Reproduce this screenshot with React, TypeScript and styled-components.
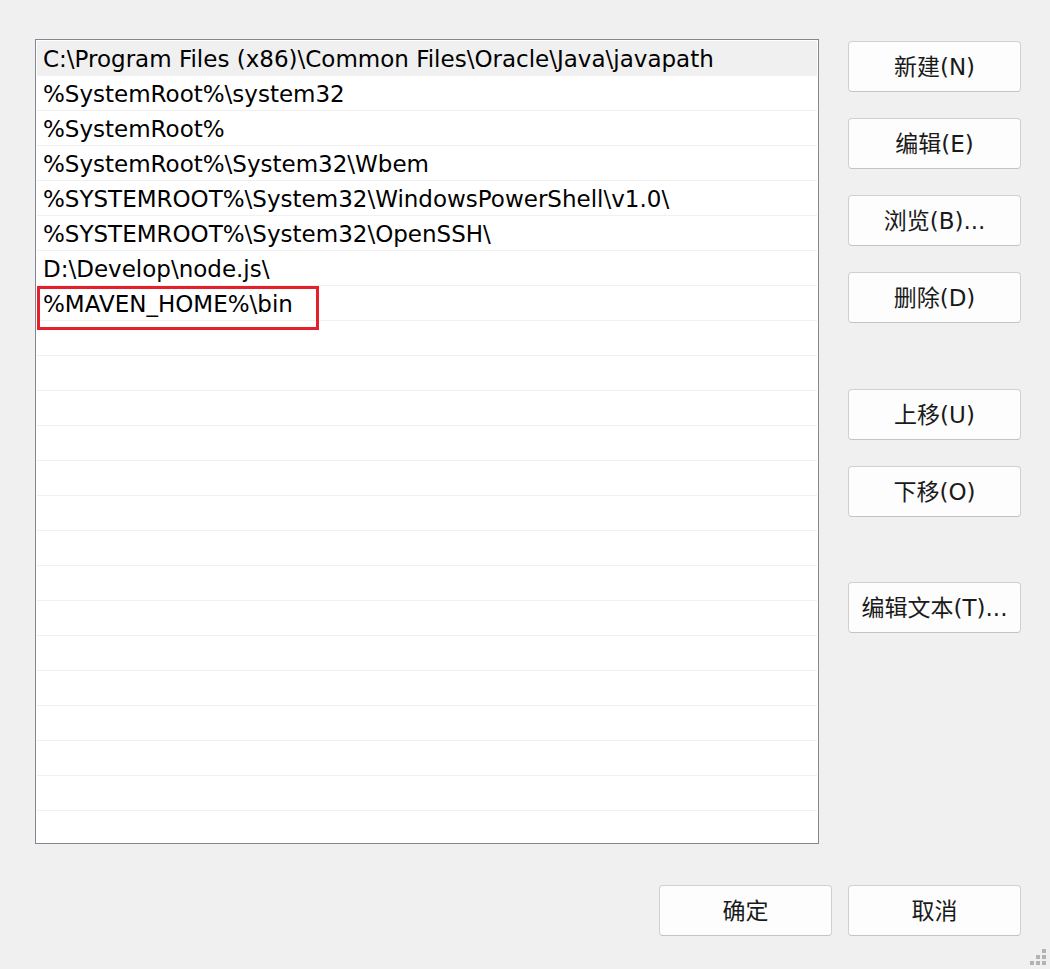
import React from "react";
import styled, { createGlobalStyle } from "styled-components";

const Global = createGlobalStyle`
  html, body { margin: 0; padding: 0; background: #f0f0f0; }
  body { font-family: "DejaVu Sans", "Noto Sans CJK SC", sans-serif; }
`;

const Window = styled.div`
  width: 1050px;
  height: 969px;
  box-sizing: border-box;
  padding: 39px 0 0 35px;
  display: flex;
  flex-direction: column;
  position: relative;
  overflow: hidden;
`;

const Top = styled.div`
  display: flex;
  gap: 29px;
`;

const ListBox = styled.div`
  width: 784px;
  height: 805px;
  box-sizing: border-box;
  border: 1px solid #828790;
  background: #fff;
  padding: 1px;
  overflow: hidden;
`;

const Row = styled.div<{ $selected?: boolean }>`
  position: relative;
  height: 35px;
  box-sizing: border-box;
  border-bottom: 1px solid #f0f0f0;
  background: ${(p) => (p.$selected ? "#f0f0f0" : "#fff")};
  padding: 2px 0 0 6px;
  display: flex;
  align-items: center;
  font-family: "DejaVu Sans", "Noto Sans CJK SC", sans-serif;
  font-size: 23px;
  line-height: 1;
  color: #000;
  white-space: nowrap;
`;

const Highlight = styled.div`
  position: absolute;
  z-index: 1;
  left: 0;
  top: 0;
  width: 282px;
  height: 44px;
  box-sizing: border-box;
  border: 3px solid #e5202a;
  pointer-events: none;
`;

const Side = styled.div`
  display: flex;
  flex-direction: column;
  padding-top: 2px;
`;

const Button = styled.button<{ $gap?: number }>`
  width: 173px;
  height: 51px;
  margin-top: ${(p) => p.$gap ?? 0}px;
  box-sizing: border-box;
  border: 1px solid #d0d0d0;
  border-bottom-color: #c4c4c4;
  border-radius: 4px;
  background: #fdfdfd;
  font-family: "DejaVu Sans", "Noto Sans CJK SC", sans-serif;
  font-size: 23px;
  line-height: 1;
  color: #1a1a1a;
  padding: 2px 0 0;
  display: flex;
  align-items: center;
  justify-content: center;
`;

const Footer = styled.div`
  display: flex;
  justify-content: flex-end;
  gap: 16px;
  padding-right: 29px;
  margin-top: 41px;
`;

const Grip = styled.svg`
  position: absolute;
  right: 4px;
  bottom: 4px;
`;

const paths = [
  "C:\\Program Files (x86)\\Common Files\\Oracle\\Java\\javapath",
  "%SystemRoot%\\system32",
  "%SystemRoot%",
  "%SystemRoot%\\System32\\Wbem",
  "%SYSTEMROOT%\\System32\\WindowsPowerShell\\v1.0\\",
  "%SYSTEMROOT%\\System32\\OpenSSH\\",
  "D:\\Develop\\node.js\\",
  "%MAVEN_HOME%\\bin",
];

const totalRows = 23;

const gripDots = [
  [12, 0],
  [6, 6],
  [12, 6],
  [0, 12],
  [6, 12],
  [12, 12],
];

export default function App() {
  const rows = Array.from({ length: totalRows }, (_, i) => paths[i] ?? "");
  return (
    <>
      <Global />
      <Window>
        <Top>
          <ListBox>
            {rows.map((t, i) => (
              <Row key={i} $selected={i === 0}>
                {t}
                {i === 7 && <Highlight />}
              </Row>
            ))}
          </ListBox>
          <Side>
            <Button>新建(N)</Button>
            <Button $gap={26}>编辑(E)</Button>
            <Button $gap={26}>浏览(B)...</Button>
            <Button $gap={26}>删除(D)</Button>
            <Button $gap={66}>上移(U)</Button>
            <Button $gap={26}>下移(O)</Button>
            <Button $gap={65}>编辑文本(T)...</Button>
          </Side>
        </Top>
        <Footer>
          <Button>确定</Button>
          <Button>取消</Button>
        </Footer>
        <Grip width="16" height="16" viewBox="0 0 16 16">
          {gripDots.map(([x, y], i) => (
            <rect key={i} x={x} y={y} width="4" height="4" fill="#b3b3b3" />
          ))}
        </Grip>
      </Window>
    </>
  );
}
